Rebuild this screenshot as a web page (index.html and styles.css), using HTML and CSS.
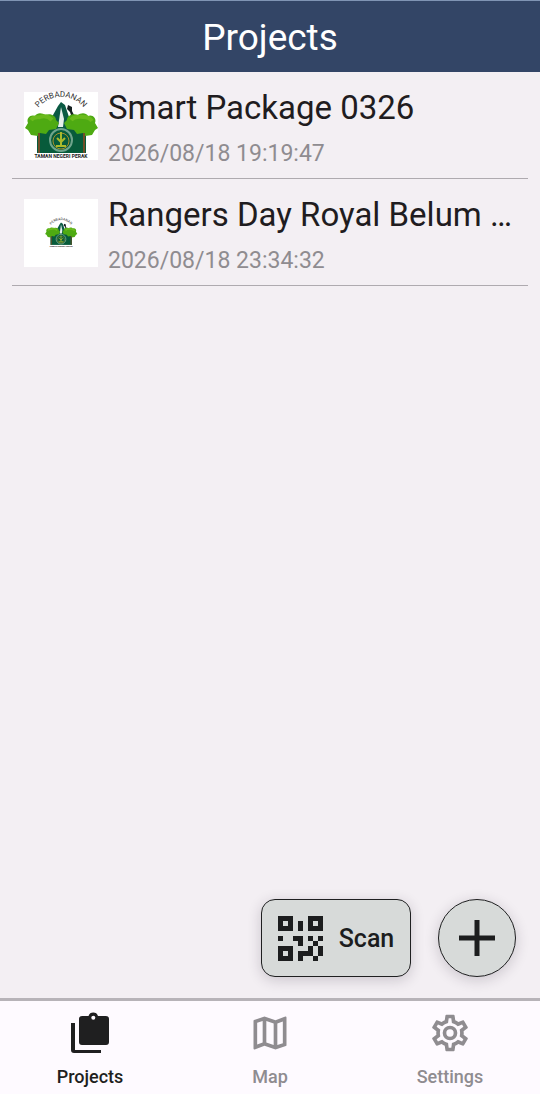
FILE: index.html
```html
<!DOCTYPE html>
<html lang="en">
<head>
<meta charset="utf-8">
<meta name="viewport" content="width=device-width, initial-scale=1">
<title>Projects</title>
<link rel="stylesheet" href="styles.css">
</head>
<body>
<div class="app">
  <header class="topbar"><h1>Projects</h1></header>
  <main class="content">
    <ul class="projects">
      <li class="project">
        <span class="thumb">
          <svg class="emblem" viewBox="0 0 72 68" role="img" aria-label="Project logo">
            <g id="emblem">
              <path id="arch" d="M10 21A29 29 0 0 1 62 21" fill="none"/>
              <text class="emblem-arc"><textPath href="#arch" startOffset="50%">PERBADANAN</textPath></text>
              <path d="M12 36h49v25H12z" fill="#075b3b"/>
              <path d="M22 38l6-15 5-9 3-4 4 3 4 12 6 13z" fill="#0a5a43"/>
              <path d="M36 15l3 12-1 8h-5z" fill="#e6eeea"/>
              <path d="M43 13l4 2v4l2 4-2 3-2-6-3-3z" fill="#152020"/>
              <path d="M3 31c-2-5 3-9 7-7 2-4 8-3 10-1 6-2 11 1 11 5l3 3-3 6-7 1-3 4-6-1-2 3-7-1-3-5-3-2z" fill="#4eaa12"/>
              <path d="M70 31c2-5-3-9-7-7-2-4-8-3-10-1-6-2-11 1-11 5l-3 3 3 6 7 1 3 4 6-1 2 3 7-1 3-5 3-2z" fill="#4eaa12"/>
              <path d="M6 28c3-4 8-2 9-3 5-2 9 0 12 3M46 28c4-5 9-3 12-3 4 0 7 1 9 4" fill="none" stroke="#6aba1c" stroke-width="4"/>
              <path d="M14 41v20M59 41v20" stroke="#704e27" stroke-width="2"/>
              <circle cx="36" cy="48" r="11" fill="#075b3b" stroke="#6fa48c" stroke-width="2"/>
              <circle cx="36" cy="49" r="8" fill="none" stroke="#a5902c"/>
              <path d="M36 40v13M32 46l4 4 4-4M31 54h10" fill="none" stroke="#a9b92c" stroke-width="2"/>
              <text class="emblem-base" x="36" y="66">TAMAN NEGERI PERAK</text>
            </g>
          </svg>
        </span>
        <div class="info"><h2>Smart Package 0326</h2><time>2026/08/18 19:19:47</time></div>
      </li>
      <li class="project">
        <span class="thumb"><svg class="emblem small" viewBox="0 0 72 68" role="img" aria-label="Project logo"><use href="#emblem"/></svg></span>
        <div class="info"><h2>Rangers Day Royal Belum …</h2><time>2026/08/18 23:34:32</time></div>
      </li>
    </ul>
    <div class="actions">
      <button class="fab scan" type="button">
        <svg class="qr" viewBox="0 0 9 9" shape-rendering="crispEdges" aria-hidden="true"><path fill-rule="evenodd" d="M0 0h3v3H0zM1 1v1h1V1zM6 0h3v3H6zM7 1v1h1V1zM0 6h3v3H0zM1 7v1h1V7zM4 1h1v2H4zM0 4h1v1H0zM3 4h2v2H4V5H3zM6 4h1v1H6zM8 4h1v1H8zM7 5h1v1H7zM6 6h1v1H6zM8 6h1v2H8zM5 7h2v1H5zM4 7h1v2H4zM7 8h1v1H7z"/></svg>
        <span>Scan</span>
      </button>
      <button class="fab add" type="button" aria-label="Add project">
        <svg class="plus" viewBox="0 0 36 36" aria-hidden="true"><path d="M18 0v36M0 18h36"/></svg>
      </button>
    </div>
  </main>
  <nav class="tabs" aria-label="Main">
    <a class="tab active" href="#projects" aria-current="page">
      <svg viewBox="0 0 44 44" aria-hidden="true"><path fill-rule="evenodd" d="M14 5h6.500a5 5 0 0 1 9.500 0H38a3 3 0 0 1 3 3v23a3 3 0 0 1-3 3H14a3 3 0 0 1-3-3V8a3 3 0 0 1 3-3zM25.300 4.700a2 2 0 1 0 0 4 2 2 0 0 0 0-4zM3 12h4v27h26v3H6a3 3 0 0 1-3-3z"/></svg>
      <span>Projects</span>
    </a>
    <a class="tab" href="#map">
      <svg viewBox="0 0 24 24" aria-hidden="true"><path d="M20.500 3l-.16.030L15 5.100 9 3 3.360 4.900c-.21.070-.36.250-.36.480V20.500c0 .28.220.5.500.5l.16-.03L9 18.900l6 2.100 5.640-1.900c.21-.07.360-.25.360-.48V3.500c0-.28-.22-.5-.5-.5zM10 5.470l4 1.400v11.660l-4-1.400V5.470zm-5 .99l3-1.010v11.700l-3 1.160V6.460zm14 11.080l-3 1.010V6.860l3-1.160v11.840z"/></svg>
      <span>Map</span>
    </a>
    <a class="tab" href="#settings">
      <svg viewBox="0 0 24 24" aria-hidden="true"><path d="M19.430 12.980c.04-.32.070-.64.070-.98s-.03-.66-.07-.98l2.110-1.650c.19-.15.240-.42.120-.64l-2-3.460c-.12-.22-.39-.3-.61-.22l-2.490 1c-.52-.4-1.080-.73-1.690-.98l-.38-2.650A.49.490 0 0 0 14 2h-4c-.25 0-.46.180-.49.420l-.38 2.650c-.61.250-1.170.59-1.690.98l-2.490-1c-.23-.09-.49 0-.61.220l-2 3.460c-.13.220-.07.490.120.640l2.110 1.650c-.04.320-.07.650-.07.980s.03.660.070.980l-2.110 1.650c-.19.150-.24.420-.12.640l2 3.460c.12.220.39.300.61.220l2.490-1c.52.400 1.080.730 1.690.980l.38 2.650c.03.240.24.420.49.420h4c.25 0 .46-.18.490-.42l.38-2.650c.61-.25 1.170-.59 1.690-.98l2.490 1c.23.090.49 0 .61-.22l2-3.460c.12-.22.070-.49-.12-.64zm-1.980-1.710c.04.310.05.520.05.730s-.02.430-.05.730l-.14 1.130.89.700 1.080.840-.7 1.210-1.270-.51-1.040-.42-.9.680c-.43.320-.84.560-1.250.73l-1.060.43-.16 1.130-.2 1.350h-1.400l-.19-1.350-.16-1.130-1.060-.43c-.43-.18-.83-.41-1.230-.71l-.91-.7-1.060.43-1.270.51-.7-1.210 1.080-.84.890-.7-.14-1.130c-.03-.31-.05-.54-.05-.74s.02-.43.050-.73l.14-1.130-.89-.7-1.080-.84.700-1.210 1.270.51 1.040.42.900-.68c.43-.32.840-.56 1.250-.73l1.060-.43.160-1.130.2-1.350h1.390l.19 1.350.16 1.130 1.060.43c.43.180.83.410 1.230.71l.91.700 1.060-.43 1.270-.51.700 1.210-1.070.85-.89.700zM12 8a4 4 0 1 0 0 8 4 4 0 0 0 0-8zm0 6a2 2 0 1 1 0-4 2 2 0 0 1 0 4z"/></svg>
      <span>Settings</span>
    </a>
  </nav>
</div>
</body>
</html>
```
FILE: styles.css
```css
* { box-sizing: border-box; }
body { margin: 0; font-family: Roboto, "Liberation Sans", sans-serif; color: #1f1c20; background: #f3eff3; }
h1, h2, ul { margin: 0; padding: 0; font-weight: 400; }
.app { min-height: 100vh; display: flex; flex-direction: column; }
.topbar { display: flex; justify-content: center; padding: 15px 0 12px; background: #334566; color: #fff; border-top: 1px solid #8094b4; }
.topbar h1 { font-size: 37px; line-height: 44px; }
.content { flex: 1; display: flex; flex-direction: column; justify-content: space-between; padding: 0 12px; }
.projects { list-style: none; }
.project { display: flex; align-items: flex-start; gap: 10px; padding: 16px 12px 10px; border-bottom: 1px solid #aeaaaf; }
.thumb { flex: none; width: 74px; height: 68px; margin-top: 4px; background: #fff; display: flex; align-items: center; justify-content: center; }
.emblem { width: 72px; height: 68px; overflow: visible; }
.emblem.small { width: 32px; height: 30px; }
.emblem-arc { font-size: 8px; fill: #333; text-anchor: middle; }
.emblem-base { font-size: 5px; font-weight: 700; text-anchor: middle; fill: #222; }
.info { min-width: 0; flex: 1; }
.info h2 { font-size: 33px; line-height: 40px; white-space: nowrap; }
.info time { display: block; margin-top: 12px; font-size: 23px; line-height: 28px; color: #8f8c90; }
.actions { display: flex; justify-content: flex-end; gap: 27px; padding: 0 12px 21px; }
.fab { height: 78px; display: flex; align-items: center; justify-content: center; gap: 16px; padding: 1px 0 0; border: 1px solid #1f2021; background: #d7dad9; color: #1c1d1e; box-shadow: 0 3px 14px rgba(40, 30, 50, 0.2); font: 500 25px/30px Roboto, sans-serif; }
.scan { width: 150px; border-radius: 14px; }
.add { width: 78px; padding: 0; border-radius: 50%; }
.qr { width: 45px; height: 45px; fill: #1c1d1e; }
.plus { width: 36px; height: 36px; stroke: #1c1d1e; stroke-width: 5; }
.tabs { display: grid; grid-template-columns: repeat(3, 1fr); border-top: 3px solid #b7b3b8; background: #fefaff; }
.tab { display: flex; flex-direction: column; align-items: center; gap: 10px; padding: 10px 0 5px; color: #8f8c90; text-decoration: none; font-size: 18px; line-height: 24px; font-weight: 500; }
.tab svg { width: 44px; height: 44px; fill: currentColor; }
.active { color: #1f1f20; }
```
